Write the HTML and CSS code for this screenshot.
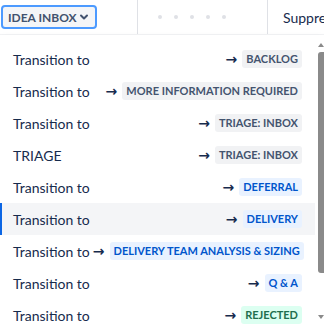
FILE: index.html
```html
<!DOCTYPE html>
<html lang="en">
<head>
  <meta charset="UTF-8">
  <title>Transitions</title>
  <link rel="stylesheet" href="styles.css">
</head>
<body>

<div class="table-head">
  <div class="cell cell-status">
    <button class="status-btn">IDEA INBOX
      <svg width="10" height="10" viewBox="0 0 10 10"><path d="M2 3.5 L5 6.5 L8 3.5" fill="none" stroke="#42526e" stroke-width="2" stroke-linecap="round" stroke-linejoin="round"/></svg>
    </button>
  </div>
  <div class="cell cell-dots">
    <span class="dot"></span><span class="dot"></span><span class="dot"></span><span class="dot"></span><span class="dot"></span>
  </div>
  <div class="cell cell-name">Suppress notifications</div>
</div>

<div class="dropdown">
  <ul class="menu">
    <li class="item"><span class="label">Transition to</span><span class="target"><span class="arrow">→</span><span class="lozenge">Backlog</span></span></li>
    <li class="item"><span class="label">Transition to</span><span class="target"><span class="arrow">→</span><span class="lozenge">More information required</span></span></li>
    <li class="item"><span class="label">Transition to</span><span class="target"><span class="arrow">→</span><span class="lozenge">Triage: inbox</span></span></li>
    <li class="item"><span class="label">TRIAGE</span><span class="target"><span class="arrow">→</span><span class="lozenge">Triage: inbox</span></span></li>
    <li class="item"><span class="label">Transition to</span><span class="target"><span class="arrow">→</span><span class="lozenge blue">Deferral</span></span></li>
    <li class="item active"><span class="label">Transition to</span><span class="target"><span class="arrow">→</span><span class="lozenge blue">Delivery</span></span></li>
    <li class="item"><span class="label">Transition to</span><span class="target"><span class="arrow">→</span><span class="lozenge blue">Delivery team analysis &amp; sizing</span></span></li>
    <li class="item"><span class="label">Transition to</span><span class="target"><span class="arrow">→</span><span class="lozenge blue">Q &amp; A</span></span></li>
    <li class="item"><span class="label">Transition to</span><span class="target"><span class="arrow">→</span><span class="lozenge green">Rejected</span></span></li>
  </ul>
  <div class="scrollbar">
    <span class="sb-up"></span>
    <span class="sb-thumb"></span>
    <span class="sb-down"></span>
  </div>
</div>

</body>
</html>
```

FILE: styles.css
```css
body {
  margin: 0;
  font-family: "Lato", "Liberation Sans", sans-serif;
  color: #172b4d;
  background: #fff;
  position: relative;
  width: 324px;
  height: 325px;
  overflow: hidden;
}

.table-head {
  display: flex;
  height: 34px;
}
.cell {
  display: flex;
  align-items: center;
  flex-shrink: 0;
  white-space: nowrap;
  box-sizing: border-box;
}
.cell-status {
  width: 138px;
  padding-left: 1px;
  border-right: 1px solid #dfe1e6;
}
.status-btn {
  display: flex;
  align-items: center;
  gap: 2px;
  height: 24px;
  padding: 0 6px 0 5px;
  border: 2px solid #4c9aff;
  border-radius: 4px;
  background: #f4f5f7;
  color: #42526e;
  font-family: inherit;
  font-weight: 700;
  font-size: 12px;
}
.cell-dots {
  width: 130px;
  border-right: 1px solid #dfe1e6;
  padding-left: 20px;
  gap: 12px;
}
.dot {
  width: 4px;
  height: 4px;
  border-radius: 50%;
  background: #dfe1e6;
}
.cell-name {
  flex: 1;
  min-width: 0;
  overflow: hidden;
  padding-left: 15px;
  font-size: 14px;
}

.dropdown {
  position: absolute;
  top: 35px;
  left: 0;
  width: 324px;
  height: 300px;
  display: flex;
  background: #fff;
  box-shadow: 0 4px 8px -2px rgba(9, 30, 66, 0.25), 0 0 1px rgba(9, 30, 66, 0.31);
}
.menu {
  list-style: none;
  margin: 0;
  padding: 8px 0 0;
  width: 315px;
  flex-shrink: 0;
}
.item {
  display: flex;
  align-items: center;
  justify-content: space-between;
  height: 32px;
  padding: 0 13px 0 11px;
  font-size: 14px;
  color: #172b4d;
  border-left: 2px solid transparent;
}
.item.active {
  background: #f4f5f7;
  border-left-color: #0c66e4;
}
.label {
  white-space: nowrap;
  margin-right: 3px;
}
.target {
  display: flex;
  align-items: center;
  gap: 5px;
}
.arrow {
  font-weight: 700;
  font-size: 14px;
  color: #172b4d;
  font-family: "DejaVu Sans", sans-serif;
}
.lozenge {
  display: inline-block;
  padding: 0 4px;
  line-height: 18px;
  border-radius: 3px;
  background: #f1f2f4;
  color: #44546f;
  font-size: 11px;
  font-weight: 700;
  text-transform: uppercase;
  white-space: nowrap;
}
.lozenge.blue {
  background: #e9f2ff;
  color: #0055cc;
}
.lozenge.green {
  background: #dcfff1;
  color: #216e4e;
}

.scrollbar {
  flex: 1;
  display: flex;
  flex-direction: column;
  align-items: flex-end;
  padding-top: 8px;
}
.sb-up, .sb-down {
  width: 0;
  height: 0;
  border-left: 3px solid transparent;
  border-right: 3px solid transparent;
}
.sb-up {
  border-bottom: 4px solid #8a8a8a;
}
.sb-thumb {
  width: 6px;
  height: 221px;
  margin: 5px 0 42px;
  background: #8a8a8a;
  border-radius: 3px 0 0 3px;
}
.sb-down {
  border-top: 4px solid #8a8a8a;
}
```
